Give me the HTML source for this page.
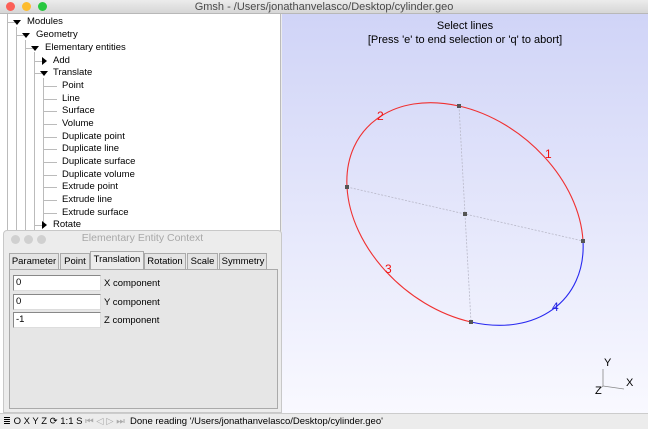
<!DOCTYPE html>
<html><head><style>
*{margin:0;padding:0;box-sizing:border-box}
body{width:648px;height:428px;overflow:hidden;background:#ececec;font-family:"Liberation Sans",sans-serif;font-size:10px;color:#000;position:relative}
.abs{position:absolute}
.tb{left:0;top:0;width:648px;height:14px;background:linear-gradient(#ececec,#d6d6d6);border-bottom:1px solid #b8b8b8;text-align:center;font-size:11px;line-height:14px;color:#4a4a4a}
.dot{width:9px;height:9px;border-radius:50%;top:2px}
.tree{left:0;top:14px;width:281px;height:400px;background:#fff;border-right:1px solid #bbb}
.t{position:absolute;font-size:9.5px;white-space:nowrap;line-height:11px}
.vl{position:absolute;width:1px;background:#bbb}
.hl{position:absolute;height:1px;background:#bbb}
.tri-d{position:absolute;width:0;height:0;border-left:4px solid transparent;border-right:4px solid transparent;border-top:5px solid #000}
.tri-r{position:absolute;width:0;height:0;border-top:4px solid transparent;border-bottom:4px solid transparent;border-left:5px solid #000}
.view{left:282px;top:14px;width:366px;height:399px;background:linear-gradient(#d0d4f7,#f9f9ff)}
.dlg{left:3px;top:230px;width:279px;height:183px;background:#ececec;border:1px solid #c8c8c8;border-radius:4px 4px 0 0}
.tab{position:absolute;top:22px;height:16px;border:1px solid #aaa;border-bottom:none;font-size:9.5px;line-height:15px;text-align:center;background:#e4e4e4}
.inp{position:absolute;left:9px;width:88px;height:16px;background:#fff;border:1px solid #888;border-right-color:#ddd;border-bottom-color:#ddd;font-size:9.5px;line-height:14px;padding-left:2px}
.lab{position:absolute;left:100px;font-size:9.5px}
.sb{left:0;top:413px;width:648px;height:15px;background:#ececec;border-top:1px solid #ccc;font-size:9.5px;line-height:15px;padding-left:3px;white-space:nowrap}
</style></head><body>
<div class="abs tb">Gmsh - /Users/jonathanvelasco/Desktop/cylinder.geo</div>
<div class="abs dot" style="left:6px;background:#fc5f57"></div>
<div class="abs dot" style="left:22px;background:#fdbc2e"></div>
<div class="abs dot" style="left:38px;background:#28c840"></div>

<div class="abs tree">
<div class="vl" style="left:7px;top:0;height:400px"></div>
<div class="vl" style="left:16px;top:13px;height:387px"></div>
<div class="vl" style="left:25px;top:26px;height:374px"></div>
<div class="vl" style="left:34px;top:38px;height:362px"></div>
<div class="vl" style="left:43px;top:64px;height:150px"></div>
<div class="hl" style="left:7px;top:8px;width:8px"></div>
<div class="hl" style="left:16px;top:21px;width:8px"></div>
<div class="hl" style="left:25px;top:34px;width:8px"></div>
<div class="hl" style="left:34px;top:47px;width:8px"></div>
<div class="hl" style="left:34px;top:59px;width:8px"></div>
<div class="hl" style="left:34px;top:211px;width:8px"></div>
<div class="tri-d" style="left:13px;top:6px"></div><div class="t" style="left:27px;top:2px">Modules</div>
<div class="tri-d" style="left:22px;top:19px"></div><div class="t" style="left:36px;top:15px">Geometry</div>
<div class="tri-d" style="left:31px;top:32px"></div><div class="t" style="left:45px;top:28px">Elementary entities</div>
<div class="tri-r" style="left:42px;top:43px"></div><div class="t" style="left:53px;top:41px">Add</div>
<div class="tri-d" style="left:40px;top:57px"></div><div class="t" style="left:53px;top:53px">Translate</div>
<div style="position:absolute;left:0;top:0">
<div class="hl" style="left:43px;top:72px;width:14px"></div><div class="t" style="left:62px;top:66px">Point</div>
<div class="hl" style="left:43px;top:85px;width:14px"></div><div class="t" style="left:62px;top:79px">Line</div>
<div class="hl" style="left:43px;top:97px;width:14px"></div><div class="t" style="left:62px;top:91px">Surface</div>
<div class="hl" style="left:43px;top:110px;width:14px"></div><div class="t" style="left:62px;top:104px">Volume</div>
<div class="hl" style="left:43px;top:123px;width:14px"></div><div class="t" style="left:62px;top:117px">Duplicate point</div>
<div class="hl" style="left:43px;top:135px;width:14px"></div><div class="t" style="left:62px;top:129px">Duplicate line</div>
<div class="hl" style="left:43px;top:148px;width:14px"></div><div class="t" style="left:62px;top:142px">Duplicate surface</div>
<div class="hl" style="left:43px;top:161px;width:14px"></div><div class="t" style="left:62px;top:155px">Duplicate volume</div>
<div class="hl" style="left:43px;top:173px;width:14px"></div><div class="t" style="left:62px;top:167px">Extrude point</div>
<div class="hl" style="left:43px;top:186px;width:14px"></div><div class="t" style="left:62px;top:180px">Extrude line</div>
<div class="hl" style="left:43px;top:199px;width:14px"></div><div class="t" style="left:62px;top:193px">Extrude surface</div>
</div>
<div class="tri-r" style="left:42px;top:207px"></div><div class="t" style="left:53px;top:205px">Rotate</div>
</div>

<div class="abs view">
<div style="position:absolute;left:0;width:366px;top:5px;text-align:center;font-size:11px;line-height:14px">Select lines<br>[Press 'e' to end selection or 'q' to abort]</div>
</div>
<svg class="abs" style="left:0;top:0" width="648" height="428">
<g stroke="#b8b8c8" stroke-width="0.8" stroke-dasharray="2,1.5" fill="none">
<line x1="459" y1="106" x2="471" y2="322"/><line x1="347" y1="187" x2="583" y2="241"/>
</g>
<g fill="none" stroke-width="1.1">
<path d="M583 241 C579.7 181.4 524.2 120.9 459 106" stroke="#f03030"/>
<path d="M459 106 C393.8 91.1 343.7 127.4 347 187" stroke="#f03030"/>
<path d="M347 187 C350.3 246.6 405.8 307.1 471 322" stroke="#f03030"/>
<path d="M471 322 C536.2 336.9 586.3 300.6 583 241" stroke="#2828f0"/>
</g>
<g fill="#555"><rect x="457" y="104" width="4" height="4"/><rect x="345" y="185" width="4" height="4"/><rect x="581" y="239" width="4" height="4"/><rect x="469" y="320" width="4" height="4"/><rect x="463" y="212" width="4" height="4"/></g>
<g font-family="Liberation Sans" font-size="12"><text x="377" y="120" fill="#f01010">2</text><text x="545" y="158" fill="#f01010">1</text><text x="385" y="273" fill="#f01010">3</text><text x="552" y="311" fill="#2020e0">4</text></g>
<g stroke="#888" stroke-width="0.8"><line x1="603" y1="369" x2="603" y2="386"/><line x1="603" y1="386" x2="624" y2="389"/><line x1="603" y1="386" x2="597" y2="391"/></g>
<g font-family="Liberation Sans" font-size="11"><text x="604" y="366">Y</text><text x="626" y="386">X</text><text x="595" y="394">Z</text></g>
</svg>

<div class="abs dlg">
<div style="position:absolute;left:0;top:0;width:277px;height:15px;text-align:center;font-size:10.5px;line-height:15px;color:#a8a8a8">Elementary Entity Context</div>
<div class="abs dot" style="left:7px;top:4px;background:#d0d0d0"></div>
<div class="abs dot" style="left:20px;top:4px;background:#d0d0d0"></div>
<div class="abs dot" style="left:33px;top:4px;background:#d0d0d0"></div>
<div class="tab" style="left:5px;width:50px">Parameter</div>
<div class="tab" style="left:56px;width:30px">Point</div>
<div class="tab" style="left:86px;width:54px;top:20px;height:19px;background:#ececec">Translation</div>
<div class="tab" style="left:140px;width:42px">Rotation</div>
<div class="tab" style="left:183px;width:31px">Scale</div>
<div class="tab" style="left:215px;width:48px">Symmetry</div>
<div style="position:absolute;left:5px;top:38px;width:269px;height:140px;border:1px solid #aaa;background:#e6e6e6"></div>
<div class="inp" style="top:44px">0</div><div class="lab" style="top:47px">X component</div>
<div class="inp" style="top:63px">0</div><div class="lab" style="top:66px">Y component</div>
<div class="inp" style="top:81px">-1</div><div class="lab" style="top:84px">Z component</div>
</div>

<div class="abs sb">≣ O X Y Z ⟳ 1:1 S <span style="color:#aaa">⏮ ◁ ▷ ⏭</span>&nbsp; Done reading '/Users/jonathanvelasco/Desktop/cylinder.geo'</div>
</body></html>
